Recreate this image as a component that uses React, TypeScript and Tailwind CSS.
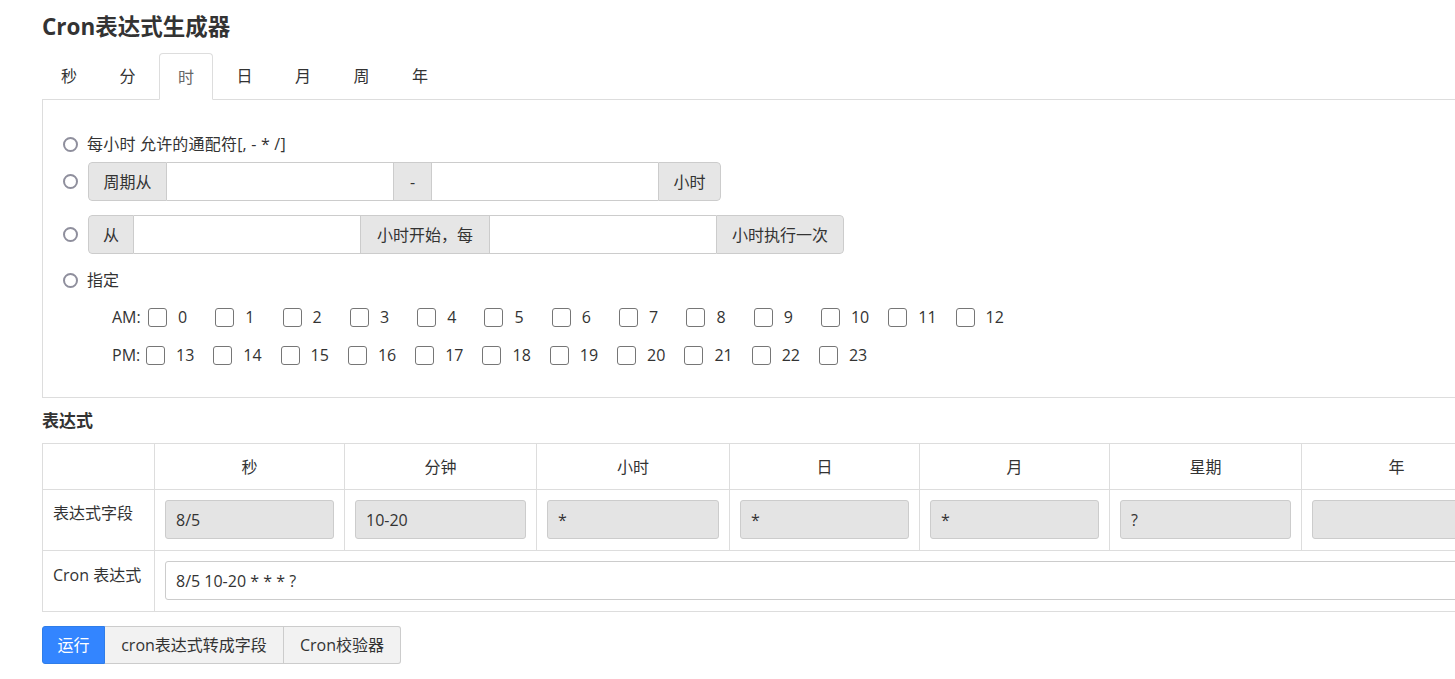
import React from "react";

const FONT = { fontFamily: '"Open Sans", "Noto Sans CJK SC", sans-serif' };

function Radio() {
  return (
    <span className="inline-block w-[15px] h-[15px] rounded-full border-2 border-[#8f8f9d] bg-white shrink-0" />
  );
}

function Checkbox() {
  return <span className="inline-block w-[19px] h-[19px] rounded-[3px] border border-[#767676] bg-white shrink-0" />;
}

function Addon({ w, children }: { w: string; children?: React.ReactNode }) {
  return (
    <div className={`${w} h-full flex items-center justify-center bg-[#e6e6e6] border border-[#cccccc] text-[16px] text-[#333] shrink-0`}>
      {children}
    </div>
  );
}

function TextIn() {
  return <div className="w-[226px] h-full bg-white border-y border-[#cccccc] shrink-0" />;
}

export default function App() {
  const tabs = ["秒", "分", "时", "日", "月", "周", "年"];
  const am = Array.from({ length: 13 }, (_, i) => i);
  const pm = Array.from({ length: 11 }, (_, i) => i + 13);
  const heads = ["秒", "分钟", "小时", "日", "月", "星期", "年"];
  const vals = ["8/5", "10-20", "*", "*", "*", "?", ""];
  const widths = ["w-[190px]", "w-[192px]", "w-[193px]", "w-[190px]", "w-[190px]", "w-[192px]", "w-[190px]"];

  return (
    <div className="w-full overflow-hidden bg-white text-[#333]" style={FONT}>
      <div className="w-[1560px] pl-[42px] pb-[16px]">
        <h1 className="pt-[12px] h-[44px] leading-[30px] text-[22.5px] font-bold text-[#333]">Cron表达式生成器</h1>

        {/* tabs */}
        <div className="mt-[9px] flex items-end gap-[4.5px] border-b border-[#dddddd] h-[47px] w-[1460px]">
          {tabs.map((t) => (
            <div
              key={t}
              className={
                t === "时"
                  ? "w-[54px] h-[47px] -mb-px flex items-center justify-center border border-[#dddddd] border-b-white rounded-t-[4px] bg-white text-[16px] text-[#666]"
                  : "w-[54px] h-[46px] flex items-center justify-center text-[16px] text-[#333]"
              }
            >
              {t}
            </div>
          ))}
        </div>

        {/* panel */}
        <div className="w-[1460px] border-x border-b border-[#dddddd] pt-[34px] pb-[32px] pl-[20px]">
          <div className="flex items-center h-[20px] gap-[9px]">
            <Radio />
            <span className="text-[16px] tracking-[0.2px]">每小时 允许的通配符[, - * /]</span>
          </div>
          <div className="flex items-center h-[39px] mt-[8px] gap-[10px]">
            <Radio />
            <div className="flex h-full rounded-[4px] overflow-hidden">
              <Addon w="w-[79px] rounded-l-[4px]">周期从</Addon>
              <TextIn />
              <Addon w="w-[39px]">-</Addon>
              <TextIn />
              <Addon w="w-[63px] rounded-r-[4px]">小时</Addon>
            </div>
          </div>
          <div className="flex items-center h-[39px] mt-[14px] gap-[10px]">
            <Radio />
            <div className="flex h-full rounded-[4px] overflow-hidden">
              <Addon w="w-[46px] rounded-l-[4px]">从</Addon>
              <TextIn />
              <Addon w="w-[130px]">小时开始，每</Addon>
              <TextIn />
              <Addon w="w-[128px] rounded-r-[4px]">小时执行一次</Addon>
            </div>
          </div>
          <div className="flex items-center h-[20px] mt-[16px] gap-[9px]">
            <Radio />
            <span className="text-[16px]">指定</span>
          </div>
          <div className="flex items-center h-[20px] mt-[17px] pl-[49px] text-[16px] text-[#333]">
            <span className="w-[36px]">AM:</span>
            {am.map((n) => (
              <div key={n} className="w-[67.3px] flex items-center shrink-0">
                <Checkbox />
                <span className="ml-[11px]">{n}</span>
              </div>
            ))}
          </div>
          <div className="flex items-center h-[20px] mt-[18px] pl-[49px] text-[16px] text-[#333]">
            <span className="w-[34px]">PM:</span>
            {pm.map((n) => (
              <div key={n} className="w-[67.3px] flex items-center shrink-0">
                <Checkbox />
                <span className="ml-[11px]">{n}</span>
              </div>
            ))}
          </div>
        </div>

        <h2 className="mt-[12px] h-[22px] leading-[22px] text-[17px] font-bold text-[#333]">表达式</h2>

        <table className="mt-[11px] table-fixed border-collapse text-[16px] text-[#333]">
          <colgroup>
            <col className="w-[112px]" />
            {widths.map((w, i) => (
              <col key={i} className={w} />
            ))}
          </colgroup>
          <tbody>
            <tr>
              <td className="border border-[#dddddd] h-[46px]" />
              {heads.map((h) => (
                <td key={h} className="border border-[#dddddd] h-[46px] text-center align-middle">
                  {h}
                </td>
              ))}
            </tr>
            <tr>
              <td className="border border-[#dddddd] align-top pt-[13px] pl-[10px] leading-[20px]">表达式字段</td>
              {vals.map((v, i) => (
                <td key={i} className="border border-[#dddddd] pt-[10px] pb-[11px] px-[10px]">
                  <div className="h-[39px] rounded-[3px] border border-[#cccccc] bg-[#e4e4e4] flex items-center pl-[10px] text-[16px]">
                    {v}
                  </div>
                </td>
              ))}
            </tr>
            <tr>
              <td className="border border-[#dddddd] align-top pt-[14px] pl-[10px] leading-[20px]">Cron 表达式</td>
              <td colSpan={7} className="border border-[#dddddd] pt-[10px] pb-[11px] px-[10px]">
                <div className="h-[39px] rounded-[3px] border border-[#cccccc] bg-white flex items-center pl-[10px] text-[16px]">
                  8/5 10-20 * * * ?
                </div>
              </td>
            </tr>
          </tbody>
        </table>

        <div className="mt-[14px] flex h-[38px] text-[16px]">
          <div className="w-[63px] h-full flex items-center justify-center bg-[#3385ff] border border-[#2f7de8] text-white rounded-l-[3px]">
            运行
          </div>
          <div className="w-[179px] h-full flex items-center justify-center bg-[#f2f2f2] border-y border-r border-[#cccccc] text-[#333]">
            cron表达式转成字段
          </div>
          <div className="w-[117px] h-full flex items-center justify-center bg-[#f2f2f2] border-y border-r border-[#cccccc] text-[#333] rounded-r-[3px]">
            Cron校验器
          </div>
        </div>
      </div>
    </div>
  );
}
